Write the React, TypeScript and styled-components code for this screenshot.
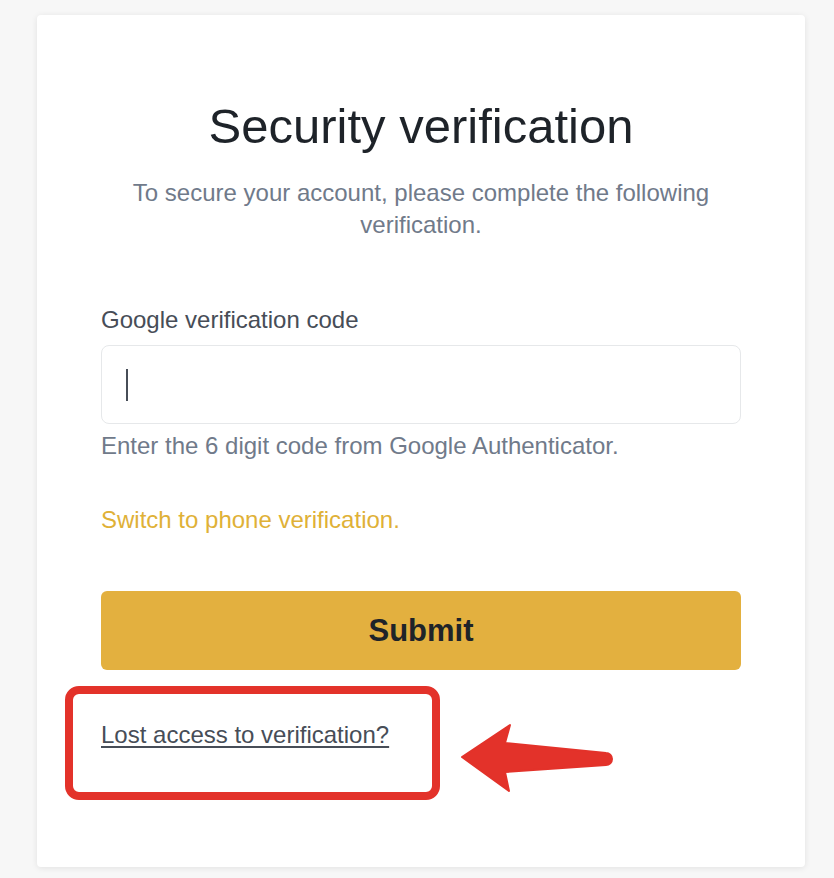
import styled, { createGlobalStyle } from 'styled-components';

const GlobalStyle = createGlobalStyle`
  html, body {
    margin: 0;
    padding: 0;
    background: #f7f7f7;
  }
  * {
    box-sizing: border-box;
  }
`;

const App = () => {
  return (
    <Page>
      <GlobalStyle />
      <Card>
        <Title>Security verification</Title>
        <Subtitle>
          To secure your account, please complete the following
          <br />
          verification.
        </Subtitle>

        <FieldLabel>Google verification code</FieldLabel>
        <InputBox>
          <Caret />
        </InputBox>
        <HelperText>Enter the 6 digit code from Google Authenticator.</HelperText>

        <SwitchLink>Switch to phone verification.</SwitchLink>

        <SubmitButton type="button">Submit</SubmitButton>

        <LinkArea>
          <LostLink href="#">Lost access to verification?</LostLink>
          <Highlight />
          <Arrow width="156" height="72" viewBox="0 0 156 72">
            <path
              d="M2 35 L50 3 L45 21 L146 31 A6 6 0 0 1 146 43 L45 50 L49 69 Z"
              fill="#e3322a"
              stroke="#e3322a"
              strokeWidth="2"
              strokeLinejoin="round"
            />
          </Arrow>
        </LinkArea>
      </Card>
    </Page>
  );
};

export default App;

const Page = styled.div`
  min-height: 878px;
  padding: 15px 0 11px 37px;
  background: #f7f7f7;
  font-family: 'Liberation Sans', Arial, sans-serif;
`;

const Card = styled.div`
  width: 768px;
  height: 852px;
  padding: 0 64px;
  display: flex;
  flex-direction: column;
  background: #ffffff;
  border-radius: 4px;
  box-shadow: 0 1px 6px rgba(0, 0, 0, 0.09);
`;

const Title = styled.h1`
  margin: 83px 0 0;
  font-size: 49px;
  line-height: 56px;
  font-weight: 400;
  color: #1e2329;
  text-align: center;
`;

const Subtitle = styled.p`
  margin: 23px 0 0;
  font-size: 24px;
  line-height: 32px;
  color: #707a8a;
  text-align: center;
`;

const FieldLabel = styled.label`
  margin-top: 65px;
  font-size: 24px;
  line-height: 28px;
  color: #474d57;
`;

const InputBox = styled.div`
  margin-top: 11px;
  height: 79px;
  padding: 0 24px;
  display: flex;
  align-items: center;
  border: 1px solid #e6e8ea;
  border-radius: 8px;
`;

const Caret = styled.span`
  width: 2px;
  height: 32px;
  background: #474d57;
`;

const HelperText = styled.div`
  margin-top: 8px;
  font-size: 24px;
  line-height: 28px;
  color: #707a8a;
`;

const SwitchLink = styled.div`
  margin-top: 46px;
  font-size: 24px;
  line-height: 28px;
  color: #dfb137;
`;

const SubmitButton = styled.button`
  margin-top: 57px;
  height: 79px;
  border: none;
  border-radius: 6px;
  background: #e3b03f;
  color: #1e2329;
  font-family: inherit;
  font-size: 31px;
  font-weight: 700;
`;

const LinkArea = styled.div`
  position: relative;
  margin-top: 51px;
  line-height: 28px;
`;

const LostLink = styled.a`
  font-size: 24px;
  color: #474d57;
  text-decoration: underline;
  text-underline-offset: 3px;
`;

const Highlight = styled.div`
  position: absolute;
  left: -36px;
  top: -35px;
  width: 375px;
  height: 114px;
  border: 8px solid #e3322a;
  border-radius: 14px;
  pointer-events: none;
`;

const Arrow = styled.svg`
  position: absolute;
  left: 359px;
  top: 1px;
`;
